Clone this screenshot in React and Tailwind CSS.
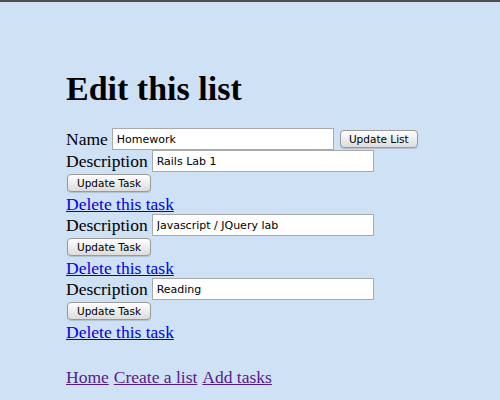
import React from 'react';

const serif = { fontFamily: '"Liberation Serif", "DejaVu Serif", serif' };

const AquaButton = ({ children, className = '' }) => (
    <button
        className={`h-[18px] px-0 whitespace-nowrap rounded-[4px] border border-[#9a9a9a] bg-gradient-to-b from-white to-[#dcdcdc] text-[10.5px] leading-none text-black font-['DejaVu_Sans',sans-serif] shadow-[0_1px_1px_rgba(0,0,0,0.15)] ${className}`}
    >
        {children}
    </button>
);

const TextField = ({ value, width }) => (
    <input
        type="text"
        defaultValue={value}
        className={`h-[22px] ${width} border border-[#a9a9a9] bg-white px-[4px] text-[11px] text-black font-['DejaVu_Sans',sans-serif] outline-none`}
    />
);

const TaskBlock = ({ value }) => (
    <div>
        <div className="flex items-center h-[22px]">
            <span className="mr-[4px]">Description</span>
            <TextField value={value} width="w-[222px]" />
        </div>
        <div className="h-[22px] flex items-center pl-[1px]">
            <AquaButton className="w-[84px]">Update Task</AquaButton>
        </div>
        <div className="h-[20px] leading-[20px]">
            <a href="#" className="text-[#0000ee] underline">Delete this task</a>
        </div>
    </div>
);

export default function App() {
    return (
        <div className="min-h-[400px] w-[500px] bg-[#cfe1f5] border-t-2 border-[#4d4d4d] text-[17.5px] text-black" style={serif}>
            <div className="pl-[66px] pt-[68px]">
                <h1 className="text-[34px] font-bold leading-[38px] h-[58px]">Edit this list</h1>
                <div className="flex items-center h-[22px]">
                    <span className="mr-[4px]">Name</span>
                    <TextField value="Homework" width="w-[222px]" />
                    <AquaButton className="ml-[6px] w-[78px]">Update List</AquaButton>
                </div>
                <TaskBlock value="Rails Lab 1" />
                <TaskBlock value="Javascript / JQuery lab" />
                <TaskBlock value="Reading" />
                <div className="mt-[22px] flex gap-[5px]">
                    <a href="#" className="text-[#551a8b] underline">Home</a>
                    <a href="#" className="text-[#551a8b] underline">Create a list</a>
                    <a href="#" className="text-[#551a8b] underline">Add tasks</a>
                </div>
            </div>
        </div>
    );
}
